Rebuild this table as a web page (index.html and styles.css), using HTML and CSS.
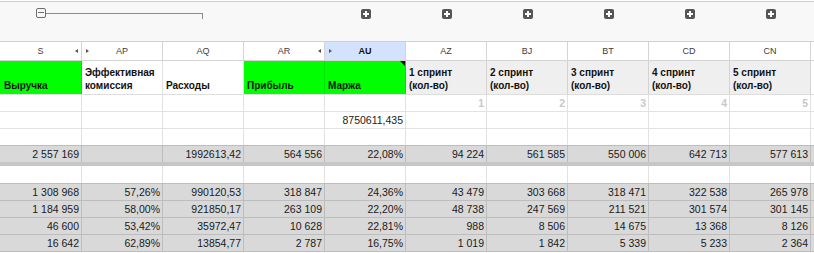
FILE: index.html
```html
<!DOCTYPE html>
<html lang="ru">
<head>
<meta charset="utf-8">
<title>Sheet</title>
<link rel="stylesheet" href="styles.css">
</head>
<body>
<div class="sheet">
  <div class="groups">
    <div class="slider">
      <span class="minus"></span>
      <span class="track"></span>
    </div>
    <span class="plus c5"></span>
    <span class="plus c6"></span>
    <span class="plus c7"></span>
    <span class="plus c8"></span>
    <span class="plus c9"></span>
    <span class="plus c10"></span>
  </div>

  <div class="row colhdr">
    <div class="cell arrow-l">S</div>
    <div class="cell arrow-r">AP</div>
    <div class="cell">AQ</div>
    <div class="cell arrow-l">AR</div>
    <div class="cell arrow-r sel">AU</div>
    <div class="cell">AZ</div>
    <div class="cell">BJ</div>
    <div class="cell">BT</div>
    <div class="cell">CD</div>
    <div class="cell">CN</div>
    <div class="cell last"></div>
  </div>

  <div class="row datahdr">
    <div class="cell green">Выручка</div>
    <div class="cell">Эффективная<br>комиссия</div>
    <div class="cell">Расходы</div>
    <div class="cell green">Прибыль</div>
    <div class="cell green note">Маржа</div>
    <div class="cell grey">1 спринт<br>(кол-во)</div>
    <div class="cell grey">2 спринт<br>(кол-во)</div>
    <div class="cell grey">3 спринт<br>(кол-во)</div>
    <div class="cell grey">4 спринт<br>(кол-во)</div>
    <div class="cell grey">5 спринт<br>(кол-во)</div>
    <div class="cell last"></div>
  </div>

  <div class="row plain">
    <div class="cell"></div><div class="cell"></div><div class="cell"></div><div class="cell"></div><div class="cell"></div>
    <div class="cell idx">1</div><div class="cell idx">2</div><div class="cell idx">3</div><div class="cell idx">4</div><div class="cell idx">5</div>
    <div class="cell last"></div>
  </div>

  <div class="row plain">
    <div class="cell"></div><div class="cell"></div><div class="cell"></div><div class="cell"></div>
    <div class="cell num">8750611,435</div>
    <div class="cell"></div><div class="cell"></div><div class="cell"></div><div class="cell"></div><div class="cell"></div>
    <div class="cell last"></div>
  </div>

  <div class="row plain pre-grey">
    <div class="cell"></div><div class="cell"></div><div class="cell"></div><div class="cell"></div><div class="cell"></div>
    <div class="cell"></div><div class="cell"></div><div class="cell"></div><div class="cell"></div><div class="cell"></div>
    <div class="cell last"></div>
  </div>

  <div class="row total">
    <div class="cell num">2 557 169</div>
    <div class="cell num"></div>
    <div class="cell num">1992613,42</div>
    <div class="cell num">564 556</div>
    <div class="cell num">22,08%</div>
    <div class="cell num">94 224</div>
    <div class="cell num">561 585</div>
    <div class="cell num">550 006</div>
    <div class="cell num">642 713</div>
    <div class="cell num">577 613</div>
    <div class="cell last"></div>
  </div>

  <div class="row plain spacer pre-grey">
    <div class="cell"></div><div class="cell"></div><div class="cell"></div><div class="cell"></div><div class="cell"></div>
    <div class="cell"></div><div class="cell"></div><div class="cell"></div><div class="cell"></div><div class="cell"></div>
    <div class="cell last"></div>
  </div>

  <div class="row data">
    <div class="cell num">1 308 968</div>
    <div class="cell num">57,26%</div>
    <div class="cell num">990120,53</div>
    <div class="cell num">318 847</div>
    <div class="cell num">24,36%</div>
    <div class="cell num">43 479</div>
    <div class="cell num">303 668</div>
    <div class="cell num">318 471</div>
    <div class="cell num">322 538</div>
    <div class="cell num">265 978</div>
    <div class="cell last"></div>
  </div>
  <div class="row data">
    <div class="cell num">1 184 959</div>
    <div class="cell num">58,00%</div>
    <div class="cell num">921850,17</div>
    <div class="cell num">263 109</div>
    <div class="cell num">22,20%</div>
    <div class="cell num">48 738</div>
    <div class="cell num">247 569</div>
    <div class="cell num">211 521</div>
    <div class="cell num">301 574</div>
    <div class="cell num">301 145</div>
    <div class="cell last"></div>
  </div>
  <div class="row data">
    <div class="cell num">46 600</div>
    <div class="cell num">53,42%</div>
    <div class="cell num">35972,47</div>
    <div class="cell num">10 628</div>
    <div class="cell num">22,81%</div>
    <div class="cell num">988</div>
    <div class="cell num">8 506</div>
    <div class="cell num">14 675</div>
    <div class="cell num">13 368</div>
    <div class="cell num">8 126</div>
    <div class="cell last"></div>
  </div>
  <div class="row data">
    <div class="cell num">16 642</div>
    <div class="cell num">62,89%</div>
    <div class="cell num">13854,77</div>
    <div class="cell num">2 787</div>
    <div class="cell num">16,75%</div>
    <div class="cell num">1 019</div>
    <div class="cell num">1 842</div>
    <div class="cell num">5 339</div>
    <div class="cell num">5 233</div>
    <div class="cell num">2 364</div>
    <div class="cell last"></div>
  </div>
</div>
</body>
</html>
```

FILE: styles.css
```css
* { box-sizing: border-box; }

html, body {
  margin: 0;
  padding: 0;
  background: #ffffff;
}

body {
  font-family: "Liberation Sans", Arial, sans-serif;
  color: #1a1a1a;
  width: 814px;
  overflow: hidden;
}

.sheet {
  padding-top: 1px;
}

/* grouping strip */
.groups {
  display: grid;
  grid-template-columns: 82px repeat(9, 81px) 1fr;
  height: 41px;
  background: #f8f8f8;
  border-top: 1px solid #cfcfcf;
  border-bottom: 1px solid #cfcfcf;
}

.slider {
  grid-column: 1 / 4;
  grid-row: 1;
  display: flex;
  align-items: flex-start;
  padding-left: 36px;
  padding-top: 6px;
}

.minus {
  position: relative;
  width: 10px;
  height: 10px;
  border: 1px solid #6e6e6e;
  border-radius: 2px;
  background: #f8f8f8;
}

.minus::after {
  content: "";
  position: absolute;
  left: 1px;
  right: 1px;
  top: 3px;
  height: 1px;
  background: #6e6e6e;
}

.track {
  width: 157px;
  height: 6px;
  margin-top: 5px;
  border-top: 1px solid #8c8c8c;
  border-right: 1px solid #8c8c8c;
}

.plus {
  grid-row: 1;
  justify-self: center;
  align-self: start;
  margin-top: 7px;
  position: relative;
  width: 10px;
  height: 10px;
  border-radius: 2px;
  background: #555555;
}

.plus::before,
.plus::after {
  content: "";
  position: absolute;
  background: #ffffff;
}

.plus::before {
  left: 2px;
  right: 2px;
  top: 4px;
  height: 2px;
}

.plus::after {
  top: 2px;
  bottom: 2px;
  left: 4px;
  width: 2px;
}

.c5 { grid-column: 5; }
.c6 { grid-column: 6; }
.c7 { grid-column: 7; }
.c8 { grid-column: 8; }
.c9 { grid-column: 9; }
.c10 { grid-column: 10; }

/* rows */
.row {
  display: grid;
  grid-template-columns: 82px repeat(9, 81px) 1fr;
  border-bottom: 1px solid #e2e2e2;
  height: 17px;
}

.cell {
  border-right: 1px solid rgba(0, 0, 0, 0.115);
  min-width: 0;
  white-space: nowrap;
  overflow: hidden;
}

.cell.last {
  border-right: none;
}

/* column letters */
.colhdr {
  height: 19px;
  border-bottom-color: #d4d4d4;
}

.colhdr .cell {
  position: relative;
  font-size: 9px;
  line-height: 18px;
  text-align: center;
  color: #3c3c3c;
  border-right-color: #d4d4d4;
}

.colhdr .cell.sel {
  background: #d3e3fd;
  color: #111111;
  font-weight: bold;
}

.arrow-l::after,
.arrow-r::before {
  content: "";
  position: absolute;
  top: 7px;
  width: 0;
  height: 0;
  border-top: 2px solid transparent;
  border-bottom: 2px solid transparent;
}

.arrow-l::after {
  right: 3px;
  border-right: 3px solid #555555;
}

.arrow-r::before {
  left: 4px;
  border-left: 3px solid #555555;
}

/* header titles */
.datahdr {
  height: 34px;
  border-bottom-color: #dedede;
}

.datahdr .cell {
  position: relative;
  display: flex;
  flex-direction: column;
  justify-content: flex-end;
  font-size: 10px;
  font-weight: bold;
  line-height: 13px;
  padding: 0 0 2px 3px;
  color: #111111;
}

.datahdr .cell:first-child {
  padding-left: 4px;
}

.datahdr .green {
  background: #00ff00;
}

.datahdr .grey {
  background: #efefef;
}

.note::after {
  content: "";
  position: absolute;
  top: 0;
  right: 0;
  width: 0;
  height: 0;
  border-top: 5px solid #111111;
  border-left: 5px solid transparent;
}

/* body rows */
.row .num,
.row .idx {
  text-align: right;
  font-size: 10.5px;
  line-height: 16px;
  padding-right: 2px;
}

.row .idx {
  color: #c9c9c9;
  font-weight: bold;
}

.pre-grey {
  border-bottom-color: #bdbdbd;
}

.spacer {
  height: 18px;
}

.total {
  height: 20px;
  background: #d9d9d9;
  border-bottom: 4px solid #c6c6c6;
}

.data {
  background: #d9d9d9;
  border-bottom-color: #bdbdbd;
}

.total .cell,
.data .cell {
  border-right-color: #bdbdbd;
}
```
